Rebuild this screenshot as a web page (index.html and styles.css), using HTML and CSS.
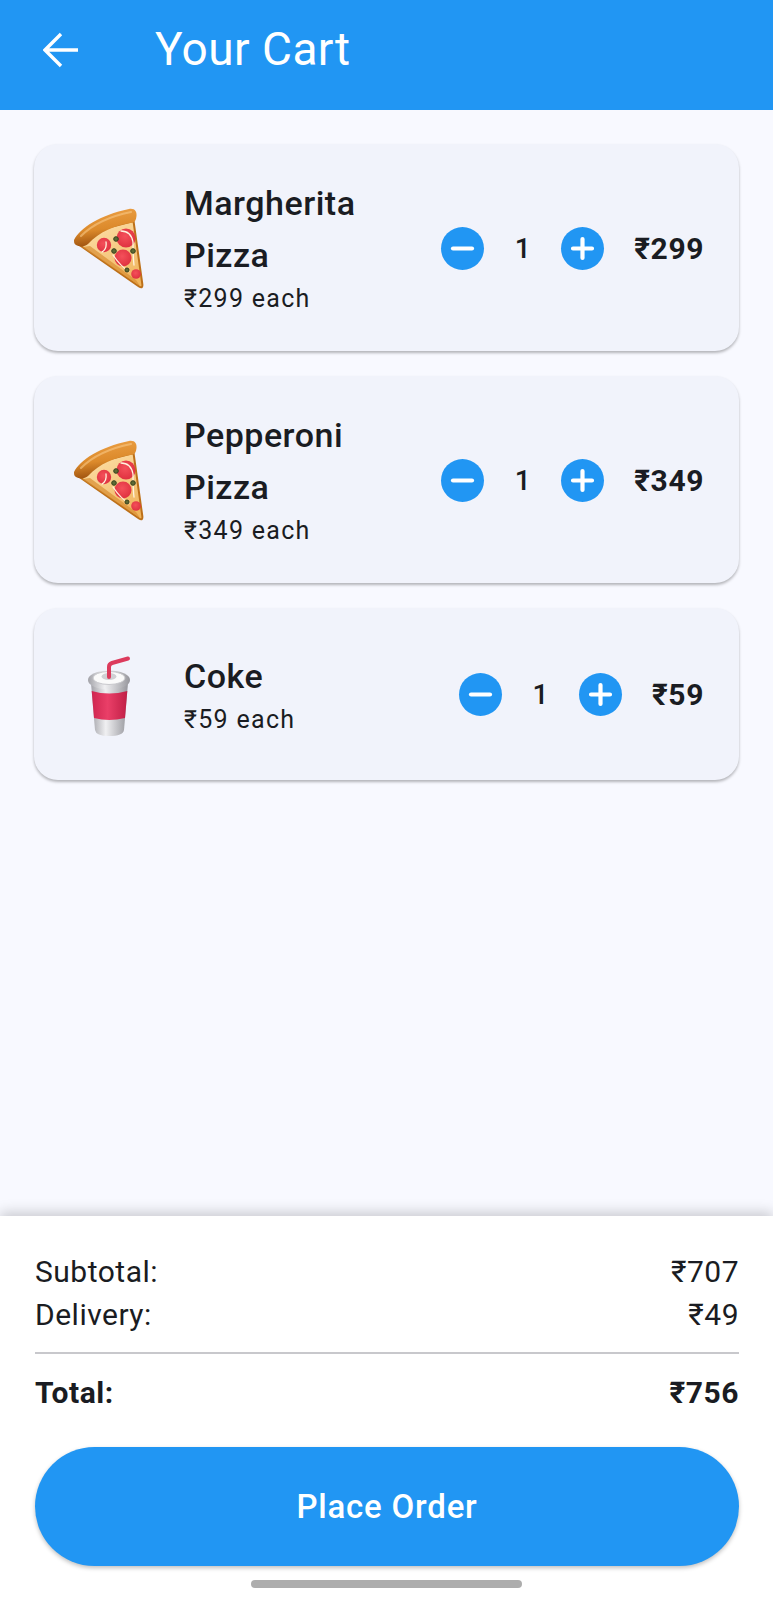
FILE: index.html
```html
<!DOCTYPE html>
<html lang="en">
<head>
<meta charset="utf-8">
<title>Your Cart</title>
<link rel="stylesheet" href="styles.css">
</head>
<body>
<svg class="defs" width="0" height="0" aria-hidden="true">
  <defs>
    <linearGradient id="crust" x1="0" y1="0" x2="0.2" y2="1">
      <stop offset="0" stop-color="#eea247"/>
      <stop offset="0.6" stop-color="#dc8a2b"/>
      <stop offset="1" stop-color="#a05410"/>
    </linearGradient>
    <linearGradient id="cheese" x1="0.2" y1="0" x2="0.7" y2="1">
      <stop offset="0" stop-color="#fde0ab"/>
      <stop offset="1" stop-color="#f0b55c"/>
    </linearGradient>
    <radialGradient id="pep" cx="0.45" cy="0.4" r="0.7">
      <stop offset="0" stop-color="#f4505a"/>
      <stop offset="1" stop-color="#dc2d3c"/>
    </radialGradient>
    <linearGradient id="cupbody" x1="0" y1="0" x2="1" y2="0">
      <stop offset="0" stop-color="#a2a2a8"/>
      <stop offset="0.4" stop-color="#f0f0f2"/>
      <stop offset="1" stop-color="#96969c"/>
    </linearGradient>
    <linearGradient id="cupred" x1="0" y1="0" x2="1" y2="0">
      <stop offset="0" stop-color="#cf2650"/>
      <stop offset="0.45" stop-color="#ea3f68"/>
      <stop offset="1" stop-color="#c01f46"/>
    </linearGradient>
    <symbol id="pizza" viewBox="15 12 78 86">
      <path d="M23 49 L84 91.500 Q88 94 87.300 89 L78.500 26 L40 36 Z" fill="url(#cheese)" stroke="#bd7019" stroke-width="2" stroke-linejoin="round"/>
      <path d="M85 91 L27 52 L35 51 L81 85 Z" fill="#d98f33" opacity=".7"/>
      <circle cx="49" cy="50" r="7.200" fill="url(#pep)"/>
      <circle cx="71" cy="43" r="9.500" fill="url(#pep)"/>
      <circle cx="68" cy="63" r="8.500" fill="url(#pep)"/>
      <circle cx="81" cy="79" r="4.800" fill="url(#pep)"/>
      <path d="M47 57 Q52 54 51 47 M66 36 Q76 36 78 47 Q78 62 79 70 M58 60 Q66 72 74 76" fill="none" stroke="#fff3df" stroke-width="1.300" stroke-linecap="round"/>
      <g fill="#5d6a34" stroke="#37401c" stroke-width="1">
        <circle cx="61" cy="44" r="2.300"/>
        <circle cx="59" cy="56" r="2.300"/>
        <circle cx="78" cy="56" r="2.300"/>
        <circle cx="72" cy="75" r="2"/>
      </g>
      <path d="M19 45 C25 33 45 20 74 14 C80 13 82 17 81.500 21 C81 25 80 27 78 27.500 C60 30 44 37 33 49 C30 52 24 52 21 50 C19 49 19 47 19 45 Z" fill="url(#crust)"/>
      <path d="M26 41 C38 29 56 21 76 17" fill="none" stroke="#f8c885" stroke-width="2.200" stroke-linecap="round" opacity=".6"/>
    </symbol>
    <symbol id="cup" viewBox="20 22 78 86">
      <path d="M59 46 V36 Q59 33 62 32 L78 27.500" fill="none" stroke="#dc3a5c" stroke-width="4" stroke-linecap="round" stroke-linejoin="round"/>
      <path d="M41 52 L45 99 Q46 105 59 105 Q73 105 74 99 L78 52 Z" fill="url(#cupbody)"/>
      <path d="M41.700 60 L44 87 Q59 91 75 87 L77.300 60 Q59 65 41.700 60 Z" fill="url(#cupred)"/>
      <ellipse cx="59" cy="49" rx="21" ry="9.500" fill="url(#cupbody)"/>
      <ellipse cx="59" cy="47" rx="16" ry="6.500" fill="#fafafa" stroke="#c9c9cd" stroke-width="1"/>
      <ellipse cx="59" cy="45.500" rx="7.500" ry="3.500" fill="#d0d0d4"/>
      <path d="M59 46 V38" stroke="#dc3a5c" stroke-width="4" stroke-linecap="round"/>
    </symbol>
    <symbol id="minus" viewBox="0 0 43 43">
      <path d="M12 21.500 H31" stroke="#fff" stroke-width="4.200" stroke-linecap="round"/>
    </symbol>
    <symbol id="plus" viewBox="0 0 43 43">
      <path d="M12 21.500 H31 M21.500 12 V31" stroke="#fff" stroke-width="4.200" stroke-linecap="round"/>
    </symbol>
  </defs>
</svg>

<header class="appbar">
  <svg class="back" viewBox="0 0 36 36" width="36" height="36" aria-hidden="true">
    <path d="M2 18 H35 M18 2 L2 18 L18 34" fill="none" stroke="#fff" stroke-width="3.400" stroke-linejoin="miter"/>
  </svg>
  <h1 class="title">Your Cart</h1>
</header>

<main class="list">
  <article class="card">
    <div class="emoji-box"><svg class="emoji"><use href="#pizza"/></svg></div>
    <div class="info">
      <div class="name">Margherita Pizza</div>
      <div class="each">₹299 each</div>
    </div>
    <div class="stepper">
      <svg class="step"><use href="#minus"/></svg>
      <span class="qty">1</span>
      <svg class="step"><use href="#plus"/></svg>
    </div>
    <div class="price">₹299</div>
  </article>

  <article class="card">
    <div class="emoji-box"><svg class="emoji"><use href="#pizza"/></svg></div>
    <div class="info">
      <div class="name">Pepperoni Pizza</div>
      <div class="each">₹349 each</div>
    </div>
    <div class="stepper">
      <svg class="step"><use href="#minus"/></svg>
      <span class="qty">1</span>
      <svg class="step"><use href="#plus"/></svg>
    </div>
    <div class="price">₹349</div>
  </article>

  <article class="card">
    <div class="emoji-box"><svg class="emoji"><use href="#cup"/></svg></div>
    <div class="info">
      <div class="name">Coke</div>
      <div class="each">₹59 each</div>
    </div>
    <div class="stepper">
      <svg class="step"><use href="#minus"/></svg>
      <span class="qty">1</span>
      <svg class="step"><use href="#plus"/></svg>
    </div>
    <div class="price">₹59</div>
  </article>
</main>

<footer class="sheet">
  <div class="row"><span>Subtotal:</span><span>₹707</span></div>
  <div class="row"><span>Delivery:</span><span>₹49</span></div>
  <hr class="divider">
  <div class="row total"><span>Total:</span><span>₹756</span></div>
  <button class="order" type="button">Place Order</button>
  <div class="homebar"></div>
</footer>
</body>
</html>
```
FILE: styles.css
```css
* { box-sizing: border-box; }
html, body { margin: 0; padding: 0; }
body {
  width: 773px;
  height: 1600px;
  display: flex;
  flex-direction: column;
  background: #f8f9ff;
  color: #1a1c22;
  font-family: Roboto, "Noto Sans", "Liberation Sans", sans-serif;
  overflow: hidden;
}
.defs { position: absolute; }

.appbar {
  height: 110px;
  flex: none;
  background: #2196f3;
  display: flex;
  align-items: center;
  padding: 0 0 10px 43px;
  gap: 76px;
  color: #fff;
}
.back { flex: none; }
.title { margin: 0 0 3px; font-size: 46px; font-weight: 400; line-height: 1; letter-spacing: .45px; }

.list {
  flex: 1;
  padding: 34px 34px 0;
  display: flex;
  flex-direction: column;
  gap: 25px;
}
.card {
  display: flex;
  align-items: center;
  padding: 33px 35px 35px;
  background: #f1f3fb;
  border-radius: 24px;
  box-shadow: 0 2px 3px rgba(0, 0, 0, .28);
}
.emoji-box {
  height: 104px;
  flex: none;
  margin: 0 36px 0 1px;
  padding-top: 6px;
  display: flex;
  align-items: center;
}
.emoji { width: 78px; height: 86px; display: block; }
.info { flex: 1; min-width: 0; padding-right: 12px; }
.name { font-size: 34px; font-weight: 500; line-height: 52px; letter-spacing: .5px; }
.each { font-size: 25px; line-height: 34px; margin-top: 1px; letter-spacing: 1.3px; }
.stepper { display: flex; align-items: center; flex: none; margin-top: 3px; }
.step { width: 43px; height: 43px; border-radius: 50%; background: #2196f3; flex: none; }
.qty { width: 77px; text-align: center; font-size: 28px; font-weight: 500; }
.price { flex: none; margin: 3px 0 0 30px; font-size: 30px; font-weight: 700; letter-spacing: .6px; }

.sheet {
  flex: none;
  background: #fff;
  padding: 34px 34px 12px 35px;
  box-shadow: 0 -4px 12px rgba(0, 0, 0, .18);
  position: relative;
}
.row {
  display: flex;
  justify-content: space-between;
  font-size: 30px;
  line-height: 43px;
  letter-spacing: .5px;
}
.divider { margin: 16px 0 17px; border: 0; height: 2px; background: #c8c8cc; }
.total { font-weight: 700; }
.order {
  display: block;
  width: 100%;
  height: 119px;
  margin-top: 33px;
  padding: 0;
  border: 0;
  border-radius: 60px;
  background: #2196f3;
  color: #fff;
  font-family: inherit;
  font-size: 33px;
  font-weight: 500;
  letter-spacing: .8px;
  box-shadow: 0 2px 4px rgba(0, 0, 0, .25);
}
.homebar {
  width: 271px;
  height: 8px;
  margin: 14px 0 0 216px;
  border-radius: 4px;
  background: #adadad;
}
```
